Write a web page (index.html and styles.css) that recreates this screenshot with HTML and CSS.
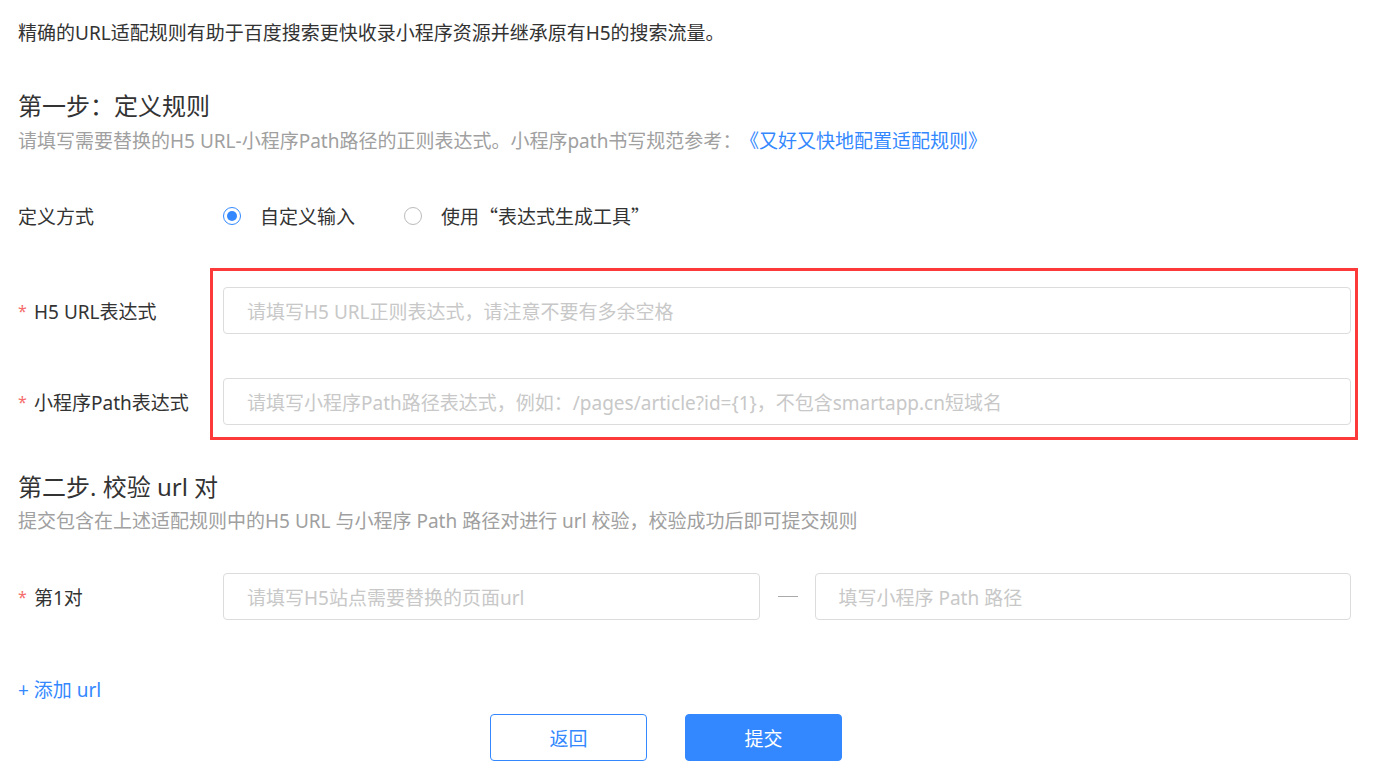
FILE: index.html
```html
<!DOCTYPE html>
<html lang="zh-CN">
<head>
<meta charset="utf-8">
<title>URL适配规则</title>
<link rel="stylesheet" href="styles.css">
</head>
<body>
<div class="page">
  <p class="intro">精确的URL适配规则有助于百度搜索更快收录小程序资源并继承原有H5的搜索流量。</p>

  <h2 class="step-title step-one">第一步：定义规则</h2>
  <p class="step-desc">请填写需要替换的H5 URL-小程序Path路径的正则表达式。小程序path书写规范参考<span class="cjk colon">：</span><a class="link" href="#"><span class="cjk">《</span>又好又快地配置适配规则<span class="cjk">》</span></a></p>

  <div class="form-row radio-row">
    <div class="label">定义方式</div>
    <div class="control radios">
      <label class="radio checked"><span class="radio-dot"></span><span class="radio-text">自定义输入</span></label>
      <label class="radio"><span class="radio-dot"></span><span class="radio-text">使用<span class="cjk-wide">“</span>表达式生成工具<span class="cjk-wide">”</span></span></label>
    </div>
  </div>

  <div class="rules">
    <div class="form-row">
      <div class="label"><span class="req">*</span>H5 URL表达式</div>
      <div class="control"><div class="input placeholder">请填写H5 URL正则表达式，请注意不要有多余空格</div></div>
    </div>
    <div class="form-row row-gap">
      <div class="label"><span class="req">*</span>小程序Path表达式</div>
      <div class="control"><div class="input placeholder">请填写小程序Path路径表达式，例如：/pages/article?id={1}，不包含smartapp.cn短域名</div></div>
    </div>
  </div>

  <h2 class="step-title step-two">第二步. 校验 url 对</h2>
  <p class="step-desc">提交包含在上述适配规则中的H5 URL 与小程序 Path 路径对进行 url 校验，校验成功后即可提交规则</p>

  <div class="form-row pair-row">
    <div class="label"><span class="req">*</span>第1对</div>
    <div class="control pair">
      <div class="input placeholder">请填写H5站点需要替换的页面url</div>
      <span class="dash"></span>
      <div class="input placeholder">填写小程序 Path 路径</div>
    </div>
  </div>

  <a class="add-url" href="#">+ 添加 url</a>

  <div class="actions">
    <button class="btn btn-default">返回</button>
    <button class="btn btn-primary">提交</button>
  </div>
</div>
</body>
</html>
```

FILE: styles.css
```css
* { box-sizing: border-box; }

body {
  margin: 0;
  background: #fff;
  color: #333;
  font-family: "Noto Sans", "Noto Sans CJK SC", sans-serif;
  font-size: 19px;
}

.page {
  padding: 0 26px 0 18px;
}

.cjk {
  font-family: "Noto Sans CJK SC", sans-serif;
}
.colon {
  margin-right: 8px;
}
.cjk-wide {
  font-family: "Noto Sans CJK SC", sans-serif;
  font-feature-settings: "fwid" 1;
}

.intro {
  margin: 20px 0 0;
  line-height: 26px;
  font-size: 19px;
  color: #333;
}

.step-title {
  margin: 0;
  font-weight: normal;
  font-size: 24px;
  line-height: 32px;
  color: #333;
}
.step-one { margin-top: 44px; }
.step-two { margin-top: 31px; }

.step-desc {
  margin: 5px 0 0;
  font-size: 19px;
  line-height: 26px;
  color: #a0a0a0;
}

.link {
  color: #3388ff;
  text-decoration: none;
}

.form-row {
  display: flex;
  align-items: center;
  height: 47px;
}

.label {
  width: 205px;
  flex: none;
  display: flex;
  align-items: center;
  font-size: 19px;
  color: #333;
}

.req {
  color: #f56c6c;
  width: 16px;
  font-size: 16px;
}

.control {
  flex: 1;
  display: flex;
  align-items: center;
  height: 100%;
}

.radio-row { margin-top: 38px; }

.radio {
  display: flex;
  align-items: center;
  cursor: pointer;
  margin-right: 49px;
}

.radio-dot {
  width: 18px;
  height: 18px;
  border-radius: 50%;
  border: 1px solid #bbb;
  margin-right: 19px;
  position: relative;
  flex: none;
}
.radio.checked .radio-dot {
  border-color: #3388ff;
}
.radio.checked .radio-dot::after {
  content: "";
  position: absolute;
  left: 3px;
  top: 3px;
  width: 10px;
  height: 10px;
  border-radius: 50%;
  background: #3388ff;
}

.radio-text { color: #333; }

.rules {
  position: relative;
  margin-top: 29px;
  padding: 19px 0 15px;
}
.rules::before {
  content: "";
  position: absolute;
  left: 192px;
  right: -7px;
  top: 0;
  bottom: 0;
  border: 3px solid #fc3a3a;
  pointer-events: none;
}

.row-gap { margin-top: 44px; }

.input {
  flex: 1;
  height: 47px;
  border: 1px solid #dcdcdc;
  border-radius: 4px;
  padding: 0 23px;
  display: flex;
  align-items: center;
  font-size: 19px;
  background: #fff;
  white-space: nowrap;
  overflow: hidden;
}
.placeholder { color: #c8c8c8; }

.pair-row { margin-top: 39px; }

.dash {
  flex: none;
  width: 20px;
  height: 1px;
  background: #aaa;
  margin: 0 17px 0 18px;
}

.add-url {
  display: block;
  margin-top: 57px;
  line-height: 26px;
  font-size: 19px;
  color: #3388ff;
  text-decoration: none;
}

.actions {
  display: flex;
  gap: 38px;
  margin-top: 11px;
  padding-left: 472px;
}

.btn {
  width: 157px;
  height: 47px;
  border-radius: 4px;
  font-family: inherit;
  font-size: 19px;
  cursor: pointer;
}
.btn-default {
  background: #fff;
  border: 1px solid #3388ff;
  color: #3388ff;
}
.btn-primary {
  background: #3388ff;
  border: 1px solid #3388ff;
  color: #fff;
}
```
